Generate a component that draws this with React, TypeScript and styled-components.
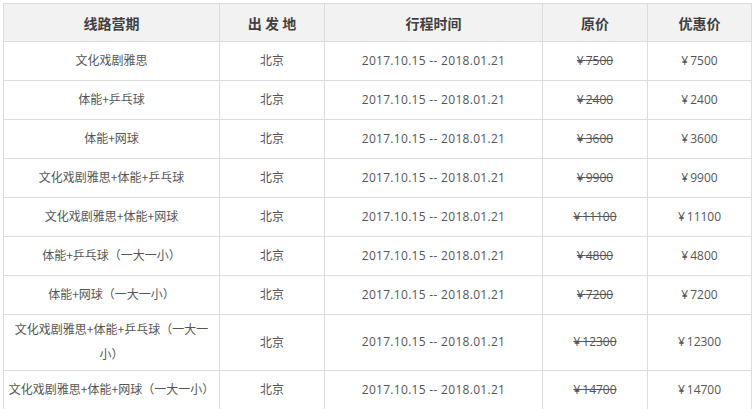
import React from "react";
import styled, { createGlobalStyle } from "styled-components";

const GlobalStyle = createGlobalStyle`
  html, body { margin: 0; padding: 0; background: #fff; }
  body { font-family: "Open Sans", "Noto Sans CJK SC", sans-serif; }
`;

const Page = styled.div`
  padding: 3px 0 0 3px;
`;

const Table = styled.table`
  width: 748px;
  border-collapse: collapse;
  table-layout: fixed;
  font-size: 12px;
  color: #555;
`;

const HeadCell = styled.th`
  height: 37px;
  padding: 0 4px;
  background: #f2f2f2;
  border: 1px solid #dcdcdc;
  font-size: 14px;
  font-weight: bold;
  color: #3f3f3f;
  text-align: center;
  font-family: "Noto Sans CJK SC", sans-serif;
`;

const Cell = styled.td`
  height: 33px;
  padding: 2px 3px 3px;
  line-height: 24px;
  border: 1px solid #dcdcdc;
  text-align: center;
  vertical-align: middle;
  background: #fff;
`;

const Name = styled.span`
  font-family: "Noto Sans CJK SC", sans-serif;
`;

const DateText = styled.span`
  letter-spacing: 0.3px;
`;

const OldPrice = styled.del`
  color: #555;
  text-decoration-thickness: 1px;
`;

const Yen = styled.span`
  letter-spacing: 2px;
`;

const Price = styled.span`
  color: #555;
`;

const rows = [
  ["文化戏剧雅思", "7500"],
  ["体能+乒乓球", "2400"],
  ["体能+网球", "3600"],
  ["文化戏剧雅思+体能+乒乓球", "9900"],
  ["文化戏剧雅思+体能+网球", "11100"],
  ["体能+乒乓球（一大一小）", "4800"],
  ["体能+网球（一大一小）", "7200"],
  ["文化戏剧雅思+体能+乒乓球（一大一小）", "12300"],
  ["文化戏剧雅思+体能+网球（一大一小）", "14700"],
];

export default function App() {
  return (
    <Page>
      <GlobalStyle />
      <Table>
        <colgroup>
          <col style={{ width: 216 }} />
          <col style={{ width: 105 }} />
          <col style={{ width: 218 }} />
          <col style={{ width: 105 }} />
          <col style={{ width: 104 }} />
        </colgroup>
        <thead>
          <tr>
            <HeadCell>线路营期</HeadCell>
            <HeadCell>出 发 地</HeadCell>
            <HeadCell>行程时间</HeadCell>
            <HeadCell>原价</HeadCell>
            <HeadCell>优惠价</HeadCell>
          </tr>
        </thead>
        <tbody>
          {rows.map(([name, price]) => (
            <tr key={name}>
              <Cell>
                <Name>{name}</Name>
              </Cell>
              <Cell>
                <Name>北京</Name>
              </Cell>
              <Cell>
                <DateText>2017.10.15 -- 2018.01.21</DateText>
              </Cell>
              <Cell>
                <OldPrice>
                  <Yen>¥</Yen>
                  {price}
                </OldPrice>
              </Cell>
              <Cell>
                <Price>
                  <Yen>¥</Yen>
                  {price}
                </Price>
              </Cell>
            </tr>
          ))}
        </tbody>
      </Table>
    </Page>
  );
}
